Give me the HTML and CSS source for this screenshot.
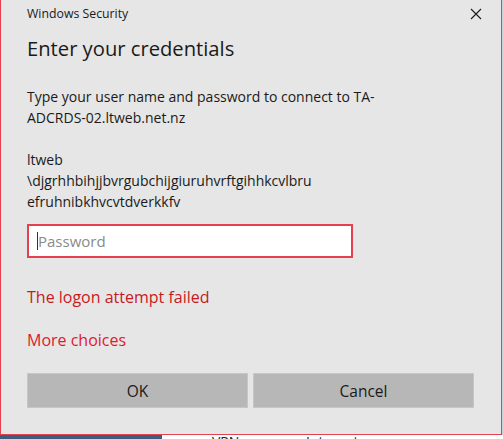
FILE: index.html
```html
<!DOCTYPE html>
<html>
<head>
<meta charset="utf-8">
<link rel="stylesheet" href="styles.css">
</head>
<body>
<div class="screen">
  <div class="dialog">
    <div class="titlebar">
      <span class="app-title">Windows Security</span>
      <svg class="close" width="12" height="12" viewBox="0 0 12 12"><path d="M1 1 L11 11 M11 1 L1 11" stroke="#1a1a1a" stroke-width="1.1" fill="none"/></svg>
    </div>
    <h1 class="heading">Enter your credentials</h1>
    <p class="msg">Type your user name and password to connect to TA-<br>ADCRDS-02.ltweb.net.nz</p>
    <p class="user">ltweb<br>\djgrhhbihjjbvrgubchijgiuruhvrftgihhkcvlbru<br>efruhnibkhvcvtdverkkfv</p>
    <div class="pwd">
      <span class="caret"></span><span class="placeholder">Password</span>
    </div>
    <p class="error">The logon attempt failed</p>
    <p class="more">More choices</p>
    <div class="buttons">
      <div class="btn">OK</div>
      <div class="btn">Cancel</div>
    </div>
  </div>
  <div class="side"></div>
</div>
<div class="desk">
  <div class="desk-blue"></div>
  <div class="desk-white"><span class="vpn">VPN</span><span class="net">Internet</span></div>
</div>
</body>
</html>
```

FILE: styles.css
```css
html, body {
  margin: 0;
  padding: 0;
  background: #ffffff;
  overflow: hidden;
}
body {
  font-family: "Open Sans", "Noto Sans", sans-serif;
  color: #1a1a1a;
  width: 503px;
  height: 439px;
}
.screen {
  display: flex;
}
.dialog {
  background: #e6e6e6;
  border-left: 1px solid #e5404f;
  border-right: 1px solid #e5404f;
  border-bottom: 1px solid #e5404f;
  padding: 0 0 0 26px;
  box-sizing: border-box;
  width: 502px;
  height: 435px;
}
.side {
  width: 1px;
  background: #c9d1dc;
}
.titlebar {
  display: flex;
  align-items: center;
  justify-content: space-between;
  height: 30px;
  padding-right: 19px;
}
.app-title {
  font-size: 12.3px;
  line-height: 16px;
  margin-top: -2px;
}
.close {
  margin-top: -2px;
}
.heading {
  font-size: 20.2px;
  font-weight: 400;
  line-height: 26px;
  margin: 5px 0 0 0;
}
.msg, .user {
  font-size: 14px;
  line-height: 21px;
  margin: 0;
}
.msg {
  margin-top: 25px;
}
.user {
  margin-top: 21px;
}
.pwd {
  width: 326px;
  height: 34px;
  box-sizing: border-box;
  border: 2px solid #e5404f;
  background: #fff;
  margin-top: 12px;
  display: flex;
  align-items: center;
  padding-left: 8px;
}
.caret {
  width: 1px;
  height: 18px;
  background: #333;
}
.placeholder {
  font-size: 15px;
  color: #8a8a8a;
}
.error, .more {
  font-size: 16px;
  line-height: 22px;
  margin: 0;
}
.error {
  color: #c8191f;
  margin-top: 28px;
}
.more {
  color: #e0192d;
  margin-top: 21px;
}
.buttons {
  display: flex;
  gap: 5px;
  margin-top: 22px;
}
.btn {
  width: 221px;
  height: 35px;
  box-sizing: border-box;
  background: #b7b7b7;
  border: 1px solid #c6c6c6;
  display: flex;
  align-items: center;
  justify-content: center;
  font-size: 15.5px;
}
.desk {
  display: flex;
  height: 4px;
  overflow: hidden;
}
.desk-blue {
  width: 162px;
  background: #3f5c7a;
}
.desk-white {
  flex: 1;
  position: relative;
  background: #ffffff;
}
.vpn, .net {
  position: absolute;
  top: 0;
  font-size: 14px;
  line-height: 14px;
  color: #222;
}
.vpn { left: 50px; }
.net { left: 144px; }
```
